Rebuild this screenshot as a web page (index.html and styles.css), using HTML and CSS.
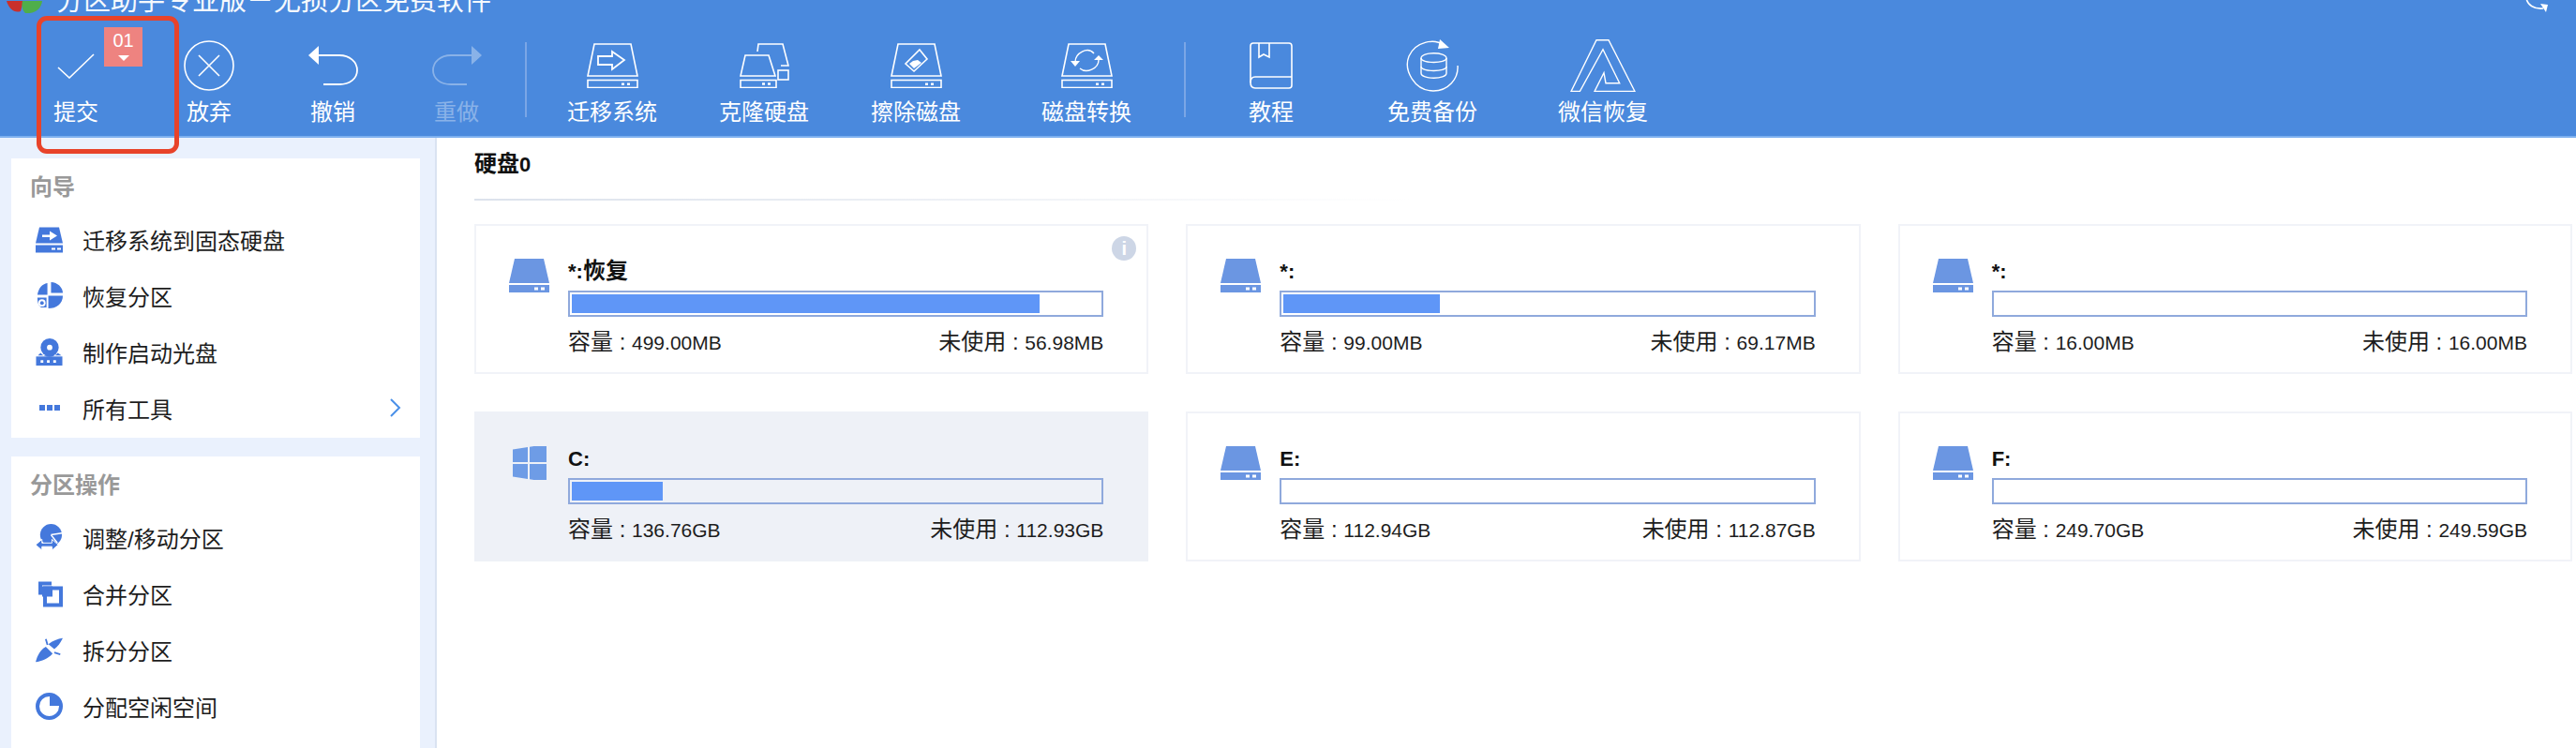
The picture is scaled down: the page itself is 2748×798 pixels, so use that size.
FILE: index.html
```html
<!DOCTYPE html>
<html lang="zh-CN">
<head>
    <meta charset="UTF-8">
    <title>分区助手</title>
    <link rel="stylesheet" href="styles.css">
</head>
<body>
    <svg class="defs" width="0" height="0">
        <symbol id="disk-frame" viewBox="0 0 55 48">
            <path d="M8 1H47L54 35H1Z" fill="none" stroke="#fff" stroke-width="1.6"/>
            <rect x="1" y="39.5" width="53" height="8" fill="none" stroke="#fff" stroke-width="1.6"/>
            <rect x="37" y="42.5" width="3" height="2.4" fill="#fff"/>
            <rect x="43" y="42.5" width="3" height="2.4" fill="#fff"/>
        </symbol>
        <symbol id="disk-solid" viewBox="0 0 43 36">
            <path d="M6 0H37L43 26H0Z" fill="#6b96e2"/>
            <path d="M0 28H43V36H0Z" fill="#6b96e2"/>
            <rect x="27" y="30.5" width="4" height="3" fill="#fff"/>
            <rect x="34" y="30.5" width="4" height="3" fill="#fff"/>
        </symbol>
    </svg>

    <div class="app">
        <header class="toolbar">
            <div class="titlebar">
                <svg class="logo" width="40" height="13" viewBox="0 0 40 13">
                    <path d="M2 0H20L17 11C10 13 5 9 2 0Z" fill="#c9302c"/>
                    <path d="M19 0H40C39 8 33 14 22 13C18 9 18 4 19 0Z" fill="#4fae4a"/>
                </svg>
                <span class="app-title">分区助手专业版－无损分区免费软件</span>
                <svg class="refresh" width="26" height="16" viewBox="0 0 26 16">
                    <path d="M2 0C3 7 10 12 20 11" fill="none" stroke="#fff" stroke-width="1.6"/>
                    <path d="M17 6L25 7L23 15Z" fill="#fff"/>
                </svg>
            </div>
            <nav class="tools">
                <div class="tool">
                    <div class="tool-icon">
                        <svg width="40" height="27" viewBox="0 0 40 27"><path d="M1 15L13 26L39 1" fill="none" stroke="#fff" stroke-width="1.6"/></svg>
                    </div>
                    <span class="tool-label">提交</span>
                    <div class="badge">
                        <span class="badge-num">01</span>
                        <span class="badge-arrow"></span>
                    </div>
                </div>
                <div class="tool gap-22">
                    <div class="tool-icon">
                        <svg width="54" height="54" viewBox="0 0 54 54"><circle cx="27" cy="27" r="26" fill="none" stroke="#fff" stroke-width="1.6"/><path d="M16 16L38 38M38 16L16 38" stroke="#fff" stroke-width="1.6"/></svg>
                    </div>
                    <span class="tool-label">放弃</span>
                </div>
                <div class="tool gap-12">
                    <div class="tool-icon">
                        <svg width="53" height="42" viewBox="0 0 53 42"><path d="M11 10H33C44 10 52 17 52 26C52 35 44 41 33 41H16" fill="none" stroke="#fff" stroke-width="1.8"/><path d="M0 10L11 0V20Z" fill="#fff"/></svg>
                    </div>
                    <span class="tool-label">撤销</span>
                </div>
                <div class="tool gap-12 tool-off">
                    <div class="tool-icon">
                        <svg width="53" height="42" viewBox="0 0 53 42"><path d="M42 10H20C9 10 1 17 1 26C1 35 9 41 20 41H37" fill="none" stroke="#fff" stroke-width="1.8"/><path d="M53 10L42 0V20Z" fill="#fff"/></svg>
                    </div>
                    <span class="tool-label">重做</span>
                </div>
                <div class="tool-sep"></div>
                <div class="tool gap-31">
                    <div class="tool-icon">
                        <svg width="55" height="48" viewBox="0 0 55 48">
                            <use href="#disk-frame" width="55" height="48"/>
                            <path d="M12 14H27V9L40 18L27 28V23H12Z" fill="none" stroke="#fff" stroke-width="1.8"/>
                        </svg>
                    </div>
                    <span class="tool-label">迁移系统</span>
                </div>
                <div class="tool gap-42">
                    <div class="tool-icon">
                        <svg width="53" height="48" viewBox="0 0 53 48" fill="none" stroke="#fff" stroke-width="1.6">
                            <path d="M19 9L20 1H46L52 24H44"/>
                            <path d="M6 13H31L38 35H1Z"/>
                            <rect x="1" y="39.5" width="38" height="8"/>
                            <rect x="41" y="29" width="11" height="10"/>
                            <path d="M24 43.5H27M30 43.5H33" stroke-width="2.4"/>
                        </svg>
                    </div>
                    <span class="tool-label">克隆硬盘</span>
                </div>
                <div class="tool gap-42">
                    <div class="tool-icon">
                        <svg width="55" height="48" viewBox="0 0 55 48">
                            <use href="#disk-frame" width="55" height="48"/>
                            <path d="M31 7L39 17L25 30L16 22Z" fill="none" stroke="#fff" stroke-width="1.6"/>
                            <path d="M29 18L33 21L25 27L20 22L24 19Z" fill="#fff"/>
                        </svg>
                    </div>
                    <span class="tool-label">擦除磁盘</span>
                </div>
                <div class="tool gap-62">
                    <div class="tool-icon">
                        <svg width="55" height="48" viewBox="0 0 55 48">
                            <use href="#disk-frame" width="55" height="48"/>
                            <path d="M15 20C15 11 28 3 35 11M40 18C40 27 27 33 20 27" fill="none" stroke="#fff" stroke-width="1.4"/>
                            <path d="M10 19H20L15 25ZM35 18H45L40 13Z" fill="#fff"/>
                        </svg>
                    </div>
                    <span class="tool-label">磁盘转换</span>
                </div>
                <div class="tool-sep gap-44"></div>
                <div class="tool gap-31">
                    <div class="tool-icon">
                        <svg width="46" height="50" viewBox="0 0 46 50" fill="none" stroke="#fff" stroke-width="1.6">
                            <path d="M4 1H42Q45 1 45 4V37H6Q1 37 1 43Q1 49 6 49H42Q45 49 45 46V37"/>
                            <path d="M1 43V4Q1 1 4 1"/>
                            <path d="M10 1V16L15 13L21 16V1"/>
                        </svg>
                    </div>
                    <span class="tool-label">教程</span>
                </div>
                <div class="tool gap-52">
                    <div class="tool-icon">
                        <svg width="56" height="56" viewBox="0 0 56 56" fill="none" stroke="#fff" stroke-width="1.4">
                            <path d="M40 6C30 -1 10 2 3 18C-3 33 9 55 29 55C45 55 56 42 55 28"/>
                            <path d="M36 0L46 9L34 10Z" fill="#fff" stroke="none"/>
                            <path d="M16 20C16 13 43 13 43 20V36C43 43 16 43 16 36Z"/>
                            <path d="M16 20C16 26 43 26 43 20M16 29C16 35 43 35 43 29"/>
                        </svg>
                    </div>
                    <span class="tool-label">免费备份</span>
                </div>
                <div class="tool gap-62">
                    <div class="tool-icon">
                        <svg width="70" height="56" viewBox="0 0 70 56"><path d="M1 55.5L28 .7H41L69 55.5H26L36 35.7L38 46.7H52.7L35 10.7L10.3 55.5Z" fill="none" stroke="#fff" stroke-width="1.4"/></svg>
                    </div>
                    <span class="tool-label">微信恢复</span>
                </div>
            </nav>
        </header>

        <div class="content">
            <aside class="sidebar">
                <section class="panel">
                    <h3 class="panel-title">向导</h3>
                    <div class="side-item">
                        <svg class="side-icon" viewBox="0 0 29 28">
                            <path d="M4 1H25L29 18H0Z" fill="#4478dc"/>
                            <path d="M7 9H15V5L23 10L15 15V11.500H7Z" fill="#fff"/>
                            <path d="M0 20H29V28H0Z" fill="#4478dc"/>
                            <path d="M17 23H21V25H17ZM23 23H27V25H23Z" fill="#fff"/>
                        </svg>
                        <span>迁移系统到固态硬盘</span>
                    </div>
                    <div class="side-item">
                        <svg class="side-icon" viewBox="0 0 30 30">
                            <path d="M13 1V14H2C3 7 7 2 13 1Z" fill="#4478dc"/>
                            <path d="M17 0C24 0 30 6 30 12H17Z" fill="#4478dc"/>
                            <path d="M30 15C30 24 23 29 14 29V15Z" fill="#4478dc"/>
                            <path d="M2 17H12V28H6C3 26 2 22 2 17Z" fill="#4478dc"/>
                            <circle cx="7" cy="23" r="4" fill="#fff"/>
                            <circle cx="7" cy="23" r="2" fill="#4478dc"/>
                        </svg>
                        <span>恢复分区</span>
                    </div>
                    <div class="side-item">
                        <svg class="side-icon" viewBox="0 0 29 30">
                            <circle cx="15" cy="10" r="10" fill="#4478dc"/>
                            <circle cx="15" cy="10" r="3" fill="#fff"/>
                            <path d="M2 19L5 16C10 22 19 22 24 16L28 19H2Z" fill="#4478dc"/>
                            <path d="M0 20H29V30H0Z" fill="#4478dc"/>
                            <path d="M5 24H8V27H5ZM12 24H15V27H12ZM19 24H22V27H19Z" fill="#fff"/>
                        </svg>
                        <span>制作启动光盘</span>
                    </div>
                    <div class="side-item">
                        <div class="side-dots"><i></i><i></i><i></i></div>
                        <span>所有工具</span>
                        <svg class="chevron" width="12" height="20" viewBox="0 0 12 20"><path d="M1 1L10 10L1 19" fill="none" stroke="#4a90e8" stroke-width="2"/></svg>
                    </div>
                </section>
                <section class="panel panel-tall">
                    <h3 class="panel-title">分区操作</h3>
                    <div class="side-item">
                        <svg class="side-icon" viewBox="0 0 30 28">
                            <circle cx="17" cy="11" r="12" fill="#4478dc"/>
                            <path d="M17 11L29 9M17 11L24 20" stroke="#fff" stroke-width="1.6"/>
                            <path d="M0 22L7 16V20H18V16L25 22L18 28V24H7V28Z" fill="#4478dc" stroke="#fff"/>
                        </svg>
                        <span>调整/移动分区</span>
                    </div>
                    <div class="side-item">
                        <svg class="side-icon" viewBox="0 0 29 28">
                            <path d="M3 1H17V5H7V15H3Z" fill="#4478dc"/>
                            <rect x="10" y="8" width="17" height="18" fill="none" stroke="#4478dc" stroke-width="4"/>
                            <rect x="7" y="6" width="11" height="11" fill="#4478dc"/>
                        </svg>
                        <span>合并分区</span>
                    </div>
                    <div class="side-item">
                        <svg class="side-icon" viewBox="0 0 32 28">
                            <path d="M0 28C2 20 6 13 12 10L20 18C15 24 7 27 0 28Z" fill="#4478dc"/>
                            <path d="M15 7C20 3 26 1 32 0C29 6 26 10 22 13Z" fill="#4478dc"/>
                            <path d="M12 1L14 8M22 17L29 19" stroke="#4478dc" stroke-width="2"/>
                        </svg>
                        <span>拆分分区</span>
                    </div>
                    <div class="side-item">
                        <svg class="side-icon" viewBox="0 0 29 29">
                            <circle cx="14.500" cy="14.500" r="12.500" fill="none" stroke="#4478dc" stroke-width="4"/>
                            <path d="M15 3A11.500 11.500 0 0 1 26 14H15Z" fill="#4478dc"/>
                        </svg>
                        <span>分配空闲空间</span>
                    </div>
                </section>
            </aside>

            <main class="main">
                <h2 class="disk-title">硬盘<span class="latin-bold">0</span></h2>
                <div class="disk-line"></div>
                <div class="cards">
                    <div class="card">
                        <svg class="card-icon"><use href="#disk-solid" width="43" height="36"/></svg>
                        <div class="card-body">
                            <div class="card-name"><span class="latin-bold">*:</span>恢复</div>
                            <div class="bar"><div class="bar-fill" style="width:88.5%"></div></div>
                            <div class="card-info">
                                <span>容量 : <span class="num">499.00MB</span></span>
                                <span>未使用 : <span class="num">56.98MB</span></span>
                            </div>
                        </div>
                        <div class="info-dot">i</div>
                    </div>
                    <div class="card">
                        <svg class="card-icon"><use href="#disk-solid" width="43" height="36"/></svg>
                        <div class="card-body">
                            <div class="card-name"><span class="latin-bold">*:</span></div>
                            <div class="bar"><div class="bar-fill" style="width:29.5%"></div></div>
                            <div class="card-info">
                                <span>容量 : <span class="num">99.00MB</span></span>
                                <span>未使用 : <span class="num">69.17MB</span></span>
                            </div>
                        </div>
                    </div>
                    <div class="card">
                        <svg class="card-icon"><use href="#disk-solid" width="43" height="36"/></svg>
                        <div class="card-body">
                            <div class="card-name"><span class="latin-bold">*:</span></div>
                            <div class="bar"></div>
                            <div class="card-info">
                                <span>容量 : <span class="num">16.00MB</span></span>
                                <span>未使用 : <span class="num">16.00MB</span></span>
                            </div>
                        </div>
                    </div>
                    <div class="card card-active">
                        <svg class="card-icon" viewBox="0 0 43 36">
                            <path d="M4 3.500L20 1V17H4ZM22 .7L40 -2V17H22ZM4 19H20V35L4 32.500ZM22 19H40V38L22 35.300Z" fill="#6e9ce6"/>
                        </svg>
                        <div class="card-body">
                            <div class="card-name"><span class="latin-bold">C:</span></div>
                            <div class="bar"><div class="bar-fill" style="width:17.2%"></div></div>
                            <div class="card-info">
                                <span>容量 : <span class="num">136.76GB</span></span>
                                <span>未使用 : <span class="num">112.93GB</span></span>
                            </div>
                        </div>
                    </div>
                    <div class="card">
                        <svg class="card-icon"><use href="#disk-solid" width="43" height="36"/></svg>
                        <div class="card-body">
                            <div class="card-name"><span class="latin-bold">E:</span></div>
                            <div class="bar"></div>
                            <div class="card-info">
                                <span>容量 : <span class="num">112.94GB</span></span>
                                <span>未使用 : <span class="num">112.87GB</span></span>
                            </div>
                        </div>
                    </div>
                    <div class="card">
                        <svg class="card-icon"><use href="#disk-solid" width="43" height="36"/></svg>
                        <div class="card-body">
                            <div class="card-name"><span class="latin-bold">F:</span></div>
                            <div class="bar"></div>
                            <div class="card-info">
                                <span>容量 : <span class="num">249.70GB</span></span>
                                <span>未使用 : <span class="num">249.59GB</span></span>
                            </div>
                        </div>
                    </div>
                </div>
            </main>
        </div>

        <div class="highlight"></div>
    </div>
</body>
</html>
```

FILE: styles.css
```css
* {
    box-sizing: border-box;
}
html, body {
    margin: 0;
    padding: 0;
    height: 798px;
    overflow: hidden;
    background-color: #fff;
}
body {
    font-family: "Liberation Sans", "Noto Sans CJK SC", sans-serif;
    font-size: 24px;
    color: #1d1d1d;
}
.defs {
    position: absolute;
}
.app {
    position: relative;
    height: 798px;
    display: flex;
    flex-direction: column;
}

/* toolbar */
.toolbar {
    height: 147px;
    flex-shrink: 0;
    background-color: #4a89dd;
    border-bottom: 2px solid #7eb0ef;
    color: #fff;
}
.titlebar {
    height: 14px;
    display: flex;
    align-items: flex-end;
    overflow: hidden;
    padding-left: 5px;
    padding-right: 29px;
}
.logo {
    flex-shrink: 0;
}
.app-title {
    margin-left: 15px;
    font-size: 29px;
    line-height: 30px;
    margin-bottom: -2px;
    white-space: nowrap;
    opacity: .95;
}
.refresh {
    margin-left: auto;
    flex-shrink: 0;
}
.tools {
    display: flex;
    padding-left: 21px;
    padding-top: 29px;
}
.tool {
    position: relative;
    width: 120px;
    display: flex;
    flex-direction: column;
    align-items: center;
}
.tool-icon {
    height: 54px;
    display: flex;
    align-items: center;
    justify-content: center;
}
.tool-label {
    margin-top: 9px;
    line-height: 28px;
    white-space: nowrap;
}
.tool-off {
    opacity: .35;
}
.tool-sep {
    width: 2px;
    height: 80px;
    margin-left: 13px;
    margin-top: 2px;
    background-color: #7ba6e6;
}
.gap-12 { margin-left: 12px; }
.gap-22 { margin-left: 22px; }
.gap-31 { margin-left: 31px; }
.gap-42 { margin-left: 42px; }
.gap-44 { margin-left: 44px; }
.gap-52 { margin-left: 52px; }
.gap-62 { margin-left: 62px; }

.badge {
    position: absolute;
    left: 90px;
    top: -14px;
    width: 41px;
    height: 42px;
    background-color: #ee8380;
    display: flex;
    flex-direction: column;
    align-items: center;
}
.badge-num {
    font-size: 20px;
    line-height: 26px;
    margin-top: 1px;
}
.badge-arrow {
    width: 0;
    height: 0;
    margin-top: 3px;
    border-left: 6px solid transparent;
    border-right: 6px solid transparent;
    border-top: 6px solid #fff;
}
.highlight {
    position: absolute;
    left: 39px;
    top: 17px;
    width: 152px;
    height: 147px;
    border: 5px solid #e8432a;
    border-radius: 11px;
}

/* sidebar */
.content {
    flex: 1;
    display: flex;
    min-height: 0;
}
.sidebar {
    width: 466px;
    flex-shrink: 0;
    background-color: #eaf1fd;
    border-right: 2px solid #dae3f1;
    padding: 22px 16px 0 12px;
}
.panel {
    background-color: #fff;
    height: 298px;
    margin-bottom: 20px;
}
.panel-tall {
    height: 320px;
}
.panel-title {
    margin: 0;
    height: 56px;
    padding-left: 20px;
    padding-top: 16px;
    font-size: 24px;
    line-height: 30px;
    font-weight: 700;
    color: #999;
}
.side-item {
    height: 60px;
    display: flex;
    align-items: center;
    padding-left: 26px;
    padding-right: 20px;
}
.side-icon {
    width: 29px;
    height: 29px;
    flex-shrink: 0;
    margin-right: 21px;
}
.side-dots {
    width: 29px;
    flex-shrink: 0;
    margin-right: 21px;
    display: flex;
    justify-content: center;
    gap: 2px;
}
.side-dots i {
    width: 6px;
    height: 6px;
    background-color: #4478dc;
}
.chevron {
    margin-left: auto;
}

/* main area */
.main {
    flex: 1;
    min-width: 0;
    padding: 13px 4px 0 40px;
}
.disk-title {
    margin: 0;
    font-size: 24px;
    line-height: 30px;
    font-weight: 700;
    color: #111;
}
.latin-bold {
    font-size: 22px;
    font-weight: 700;
}
.disk-line {
    width: 1000px;
    height: 2px;
    margin-top: 21px;
    margin-bottom: 25px;
    background: linear-gradient(to right, #dce2ec, #fff);
}
.cards {
    display: grid;
    grid-template-columns: repeat(3, 1fr);
    grid-auto-rows: 160px;
    gap: 40px;
}
.card {
    position: relative;
    display: flex;
    padding: 33px 46px 0 35px;
    border: 2px solid #f1f3f8;
}
.card-active {
    background-color: #eef1f7;
    border-color: #eef1f7;
}
.card-icon {
    width: 43px;
    height: 36px;
    flex-shrink: 0;
    margin-top: 2px;
    margin-right: 20px;
}
.card-body {
    flex: 1;
    min-width: 0;
}
.card-name {
    height: 30px;
    line-height: 30px;
    font-weight: 700;
    color: #111;
}
.bar {
    height: 28px;
    margin-top: 6px;
    padding: 2px;
    border: 2px solid #8fa9dc;
}
.bar-fill {
    height: 100%;
    background-color: #5f96f7;
}
.card-info {
    display: flex;
    justify-content: space-between;
    margin-top: 12px;
    line-height: 30px;
}
.num {
    font-size: 21px;
}
.info-dot {
    position: absolute;
    right: 11px;
    top: 11px;
    width: 26px;
    height: 26px;
    border-radius: 50%;
    background-color: #cdd6e6;
    color: #fff;
    font-size: 20px;
    font-weight: 700;
    line-height: 26px;
    text-align: center;
}
```
